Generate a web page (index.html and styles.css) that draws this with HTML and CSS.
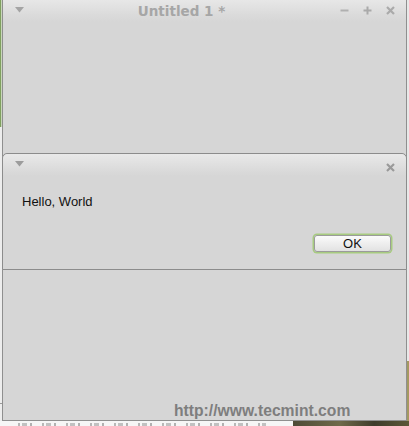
FILE: index.html
```html
<!DOCTYPE html>
<html>
<head>
<meta charset="utf-8">
<link rel="stylesheet" href="styles.css">
</head>
<body>
<div class="desktop">
  <div class="row">
    <div class="gutter-left"><div class="green"></div><div class="pale"><div class="tick"></div></div></div>
    <div class="main-window">
      <div class="titlebar">
        <div class="tb-left">
          <svg class="menu-tri" width="9" height="6" viewBox="0 0 9 6"><path d="M0 0H9L4.5 5.5Z" fill="#a4a4a4"/></svg>
        </div>
        <div class="tb-title">Untitled 1 *</div>
        <div class="tb-buttons">
          <svg width="9" height="9" viewBox="0 0 9 9"><path d="M0.5 4.5H8.5" stroke="#b0b0b0" stroke-width="2"/></svg>
          <svg width="9" height="9" viewBox="0 0 9 9"><path d="M0.5 4.5H8.5M4.5 0.5V8.5" stroke="#aaaaaa" stroke-width="2"/></svg>
          <svg width="9" height="9" viewBox="0 0 9 9"><path d="M1 1L8 8M8 1L1 8" stroke="#aaaaaa" stroke-width="2.2"/></svg>
        </div>
      </div>
      <div class="client"></div>
    </div>
    <div class="gutter-right"><div class="olive"></div></div>
  </div>
  <div class="strip">
    <div class="blur-bars"></div>
    <div class="photo"></div>
  </div>

  <div class="dialog">
    <div class="dlg-titlebar">
      <svg class="menu-tri" width="9" height="6" viewBox="0 0 9 6"><path d="M0 0H9L4.5 5.5Z" fill="#9c9c9c"/></svg>
      <svg class="dlg-close" width="9" height="9" viewBox="0 0 9 9"><path d="M1 1L8 8M8 1L1 8" stroke="#9a9a9a" stroke-width="2.2"/></svg>
    </div>
    <div class="dlg-body">
      <div class="message">Hello, World</div>
      <div class="actions"><button class="ok-btn">OK</button></div>
    </div>
  </div>

  <div class="watermark">http://www.tecmint.com</div>
</div>
</body>
</html>
```

FILE: styles.css
```css
html, body {
  margin: 0;
  padding: 0;
  background: #f2f2f2;
}

.desktop {
  position: relative;
  width: 409px;
  height: 426px;
  overflow: hidden;
  font-family: "Liberation Sans", Arial, sans-serif;
}

.row {
  display: flex;
  height: 421px;
}

.gutter-left {
  width: 2px;
  display: flex;
  flex-direction: column;
}
.gutter-left .green {
  height: 127px;
  background: linear-gradient(to right, #7fa05f 0 1px, #c9d6bb 1px);
}
.gutter-left .pale {
  flex: 1;
  background: #ededed;
  padding-top: 276px;
}
.gutter-left .tick {
  height: 1px;
  background: #9a9a9a;
}

.main-window {
  width: 403px;
  border-left: 1px solid #8f8f8f;
  border-right: 1px solid #8f8f8f;
  border-bottom: 1px solid #8f8f8f;
  background: #d6d6d6;
  display: flex;
  flex-direction: column;
}

.titlebar {
  height: 22px;
  display: flex;
  align-items: center;
  background: linear-gradient(#e7e7e7, #dadada 70%, #d6d6d6);
}
.tb-left {
  width: 26px;
  padding-left: 12px;
  box-sizing: border-box;
  display: flex;
  align-items: center;
  margin-top: -2px;
}
.tb-title {
  flex: 1;
  text-align: center;
  font-family: "DejaVu Sans", sans-serif;
  font-weight: bold;
  font-size: 13.5px;
  color: #a6a6a6;
  margin-top: -1px;
  padding-right: 2px;
}
.tb-buttons {
  display: flex;
  gap: 14px;
  padding-right: 11px;
  padding-left: 4px;
  align-items: center;
  margin-top: -2px;
}

.client {
  flex: 1;
}

.gutter-right {
  width: 2px;
  background: #e8e8e8;
  display: flex;
  flex-direction: column;
  justify-content: flex-end;
}
.gutter-right .olive {
  height: 60px;
  background: #a49a62;
}

.strip {
  height: 5px;
  display: flex;
  background: #f6f6f6;
}
.blur-bars {
  margin-left: 18px;
  margin-top: 2px;
  width: 248px;
  height: 3px;
  background: repeating-linear-gradient(to right,
    #a8a8a8 0 2px, transparent 2px 4px, #b4b4b4 4px 9px, transparent 9px 12px,
    #a0a0a0 12px 14px, transparent 14px 24px);
  opacity: 0.8;
}
.photo {
  margin-left: auto;
  width: 116px;
  background: linear-gradient(to right, #4d4a36, #6f6a4a 40%, #3e3b2b 70%, #5c5838);
}

.dialog {
  position: absolute;
  left: 2px;
  top: 153px;
  width: 403px;
  height: 115px;
  border: 1px solid #8c8c8c;
  border-radius: 5px 5px 0 0;
  background: #d6d6d6;
  display: flex;
  flex-direction: column;
}
.dlg-titlebar {
  height: 22px;
  display: flex;
  align-items: center;
  justify-content: space-between;
  padding: 0 11px 0 12px;
  border-radius: 5px 5px 0 0;
  background: linear-gradient(#e9e9e9, #dcdcdc 65%, #d6d6d6);
}
.dlg-titlebar .menu-tri {
  margin-top: -2px;
}
.dlg-titlebar .dlg-close {
  margin-top: 4px;
}

.dlg-body {
  padding: 18px 15px 0 19px;
}
.message {
  font-size: 13px;
  line-height: 15px;
  color: #111111;
}
.actions {
  display: flex;
  justify-content: flex-end;
  margin-top: 26px;
}
.ok-btn {
  width: 77px;
  height: 17px;
  padding: 0;
  border: 1px solid #9b9b9b;
  border-radius: 3px;
  background: linear-gradient(#fbfbfb, #eeeeee 50%, #e2e2e2);
  box-shadow: 0 0 0 1.5px #a7cb80;
  font-family: "Liberation Sans", Arial, sans-serif;
  font-size: 13px;
  line-height: 15px;
  color: #111111;
}

.watermark {
  position: absolute;
  left: 174px;
  top: 403px;
  font-family: "Liberation Sans", Arial, sans-serif;
  font-weight: bold;
  font-size: 15.7px;
  line-height: 16px;
  color: #7e7e7e;
  white-space: nowrap;
}
```
